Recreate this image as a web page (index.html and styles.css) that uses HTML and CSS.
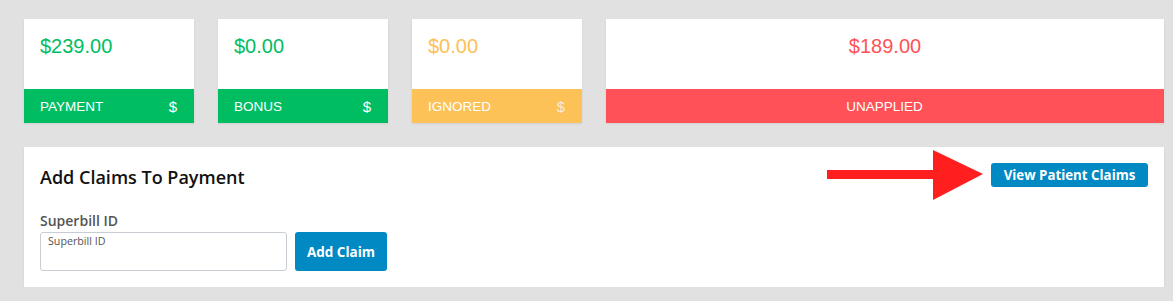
FILE: index.html
```html
<!DOCTYPE html>
<html>
<head>
<meta charset="utf-8">
<link rel="stylesheet" href="styles.css">
</head>
<body>
<div class="page">
  <div class="cards">
    <div class="card">
      <div class="amount green">$239.00</div>
      <div class="foot bg-green"><span>PAYMENT</span><span>$</span></div>
    </div>
    <div class="card">
      <div class="amount green">$0.00</div>
      <div class="foot bg-green"><span>BONUS</span><span>$</span></div>
    </div>
    <div class="card">
      <div class="amount yellow">$0.00</div>
      <div class="foot bg-yellow"><span>IGNORED</span><span class="dim">$</span></div>
    </div>
    <div class="card wide">
      <div class="amount red center">$189.00</div>
      <div class="foot bg-red center"><span>UNAPPLIED</span></div>
    </div>
  </div>

  <div class="panel">
    <div class="panel-head">
      <h2>Add Claims To Payment</h2>
      <button class="btn btn-small">View Patient Claims</button>
      <svg class="arrow" width="160" height="52" viewBox="0 0 160 52">
        <rect x="0" y="20" width="110" height="9" fill="#ff1f1f"/>
        <polygon points="106,0 156,24 106,50" fill="#ff1f1f"/>
      </svg>
    </div>
    <label class="field-label">Superbill ID</label>
    <div class="field-row">
      <textarea class="input" placeholder="Superbill ID"></textarea>
      <button class="btn btn-big">Add Claim</button>
    </div>
  </div>
</div>
</body>
</html>
```
FILE: styles.css
```css
html, body {
  margin: 0;
  padding: 0;
  background: #e1e1e1;
}
.page {
  padding: 19px 9px 0 24px;
  font-family: "Liberation Sans", Arial, sans-serif;
}
.cards {
  display: flex;
  gap: 24px;
}
.card {
  width: 170px;
  height: 104px;
  background: #fff;
  display: flex;
  flex-direction: column;
  box-shadow: 0 1px 2px rgba(0,0,0,0.08);
}
.card.wide {
  width: 558px;
}
.amount {
  flex: 1;
  padding: 16px 16px 0;
  font-size: 20px;
  line-height: 23px;
}
.center { text-align: center; justify-content: center; }
.green { color: #00bd62; }
.yellow { color: #fcc157; }
.red { color: #ff5157; }
.foot {
  height: 34px;
  display: flex;
  align-items: center;
  justify-content: space-between;
  padding: 0 17px 0 16px;
  color: #fff;
  font-size: 13.5px;
}
.foot.center { justify-content: center; }
.foot span:last-child { font-size: 15px; }
.foot.center span:last-child { font-size: 13.5px; }
.dim { color: #f3ecdf; }
.bg-green { background: #00bd62; }
.bg-yellow { background: #fcc157; }
.bg-red { background: #ff5157; }

.panel {
  margin-top: 24px;
  width: 1140px;
  box-sizing: border-box;
  height: 140px;
  background: #fff;
  padding: 16px 16px 16px 16px;
  font-family: "Open Sans", sans-serif;
  box-shadow: 0 1px 2px rgba(0,0,0,0.08);
}
.panel-head {
  position: relative;
  display: flex;
  align-items: center;
  justify-content: space-between;
  height: 24px;
}
.panel-head h2 {
  margin: 3px 0 0;
  font-size: 18px;
  font-weight: 600;
  color: #111;
}
.arrow {
  position: absolute;
  right: 161px;
  top: -13px;
}
.btn {
  background: #0089c3;
  color: #fff;
  border: none;
  font-family: "Open Sans", sans-serif;
  font-weight: 700;
  cursor: pointer;
}
.btn-small {
  width: 157px;
  height: 24px;
  font-size: 13.3px;
  border-radius: 3px;
  padding: 0;
}
.field-label {
  display: block;
  margin-top: 24px;
  font-size: 14px;
  font-weight: 600;
  color: #555;
  line-height: 20px;
}
.field-row {
  display: flex;
  gap: 8px;
  margin-top: 1px;
}
.input {
  width: 247px;
  height: 39px;
  box-sizing: border-box;
  border: 1px solid #c7cdd3;
  border-radius: 3px;
  padding: 1px 7px;
  font-family: "Open Sans", sans-serif;
  font-size: 10.7px;
  resize: none;
  outline: none;
}
.input::placeholder { color: #555; }
.btn-big {
  width: 92px;
  height: 39px;
  font-size: 13.5px;
  border-radius: 3px;
  padding: 0;
}
```
